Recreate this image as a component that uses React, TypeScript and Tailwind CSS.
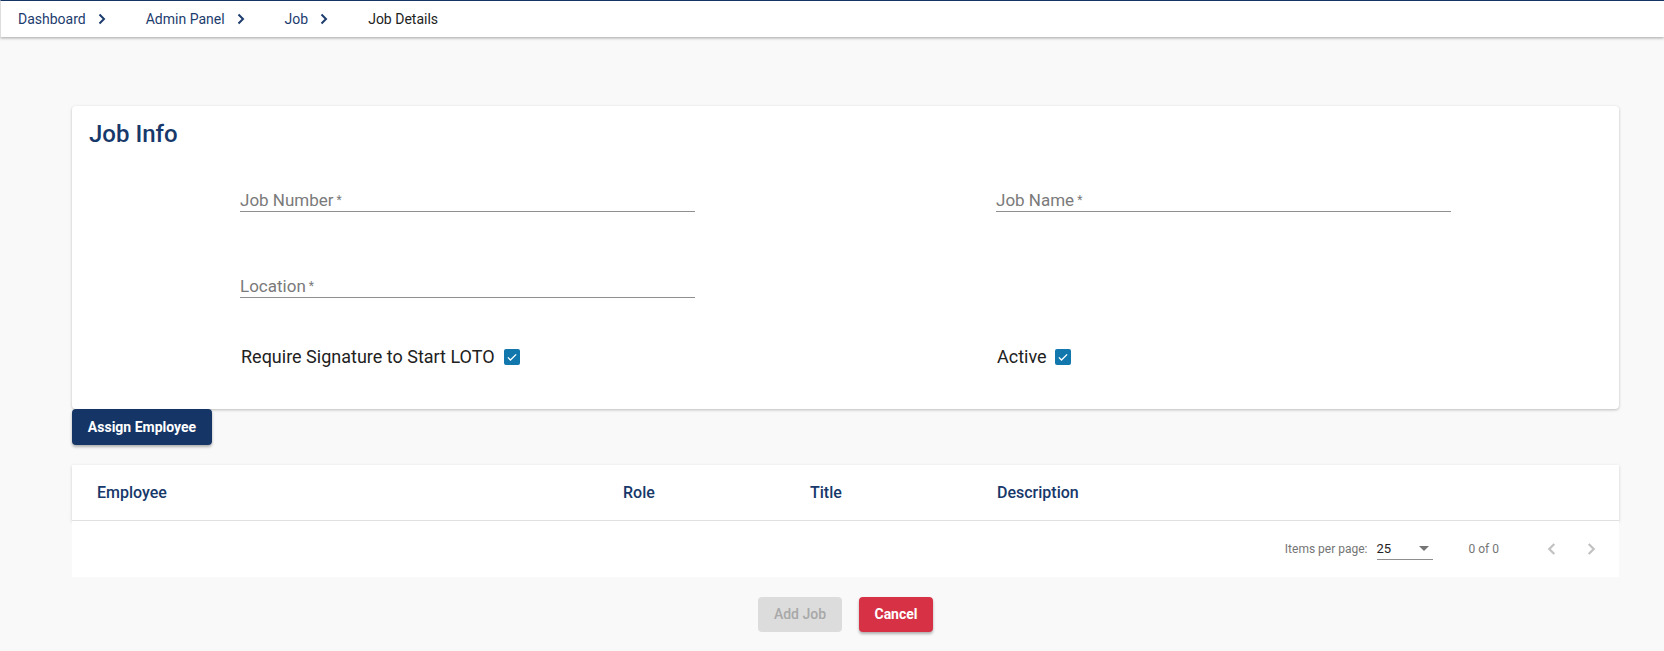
import React from 'react'

const crumbs = ['Dashboard', 'Admin Panel', 'Job']

function Chevron({ className }: { className?: string }) {
  return (
    <svg viewBox="0 0 8 12" className={className} fill="none" stroke="currentColor" strokeWidth={2}>
      <path d="M1.5 1.5 6 6l-4.5 4.5" />
    </svg>
  )
}

function Field({ label }: { label: string }) {
  return (
    <div className="w-[455px] border-b border-[#8f8f8f] pb-[1px]">
      <span className="block text-[17px] leading-[20px] text-[#7a7a7a]">
        {label}
        <span className="ml-[3px] align-top text-[12px] leading-[20px] text-[#7a7a7a]">*</span>
      </span>
    </div>
  )
}

function CheckBox() {
  return (
    <span className="inline-flex h-[16px] w-[16px] items-center justify-center rounded-[2px] bg-[#1177ad]">
      <svg viewBox="0 0 16 16" className="h-[12px] w-[12px]" fill="none" stroke="white" strokeWidth={1.8}>
        <path d="M2.5 8.5 6 12l7.5-7.5" />
      </svg>
    </span>
  )
}

export default function App() {
  const columns = ['Employee', 'Role', 'Title', 'Description']

  return (
    <div className="min-h-screen bg-[#f9f9f9] font-['Roboto',sans-serif]">
      {/* Breadcrumb bar */}
      <header className="flex h-[37px] items-center border-t border-l border-t-[#143566] border-l-[#dddddd] bg-white pl-[17px] shadow-[0_1px_3px_rgba(0,0,0,0.35)]">
        {crumbs.map((c) => (
          <div key={c} className="mr-[40px] flex items-center text-[14px] text-[#1d3c6e]">
            <span>{c}</span>
            <Chevron className="ml-[12px] h-[12px] w-[8px] text-[#1d3c6e]" />
          </div>
        ))}
        <span className="text-[14px] text-[#222222]">Job Details</span>
      </header>

      <main className="pl-[72px] pr-[45px] pt-[69px]">
        {/* Job info card */}
        <section className="h-[303px] rounded-[4px] bg-white pt-[14px] shadow-[0_1px_3px_rgba(0,0,0,0.25)]">
          <h2 className="pl-[17px] text-[24px] font-medium leading-[28px] text-[#17386a]">Job Info</h2>

          <div className="grid grid-cols-[756px_1fr] pl-[168px] pt-[42px]">
            <Field label="Job Number" />
            <Field label="Job Name" />
            <div className="pt-[64px]">
              <Field label="Location" />
            </div>
            <div />
            <div className="flex items-center gap-[9px] pt-[47px] text-[18px] leading-[24px] text-[#212121]">
              <span className="pl-[1px]">Require Signature to Start LOTO</span>
              <CheckBox />
            </div>
            <div className="flex items-center gap-[8px] pt-[47px] text-[18px] leading-[24px] text-[#212121]">
              <span className="pl-[1px]">Active</span>
              <CheckBox />
            </div>
          </div>
        </section>

        <button className="h-[36px] w-[140px] rounded-[4px] bg-[#143566] text-[14px] font-bold text-white shadow-[0_2px_3px_rgba(0,0,0,0.3)]">
          Assign Employee
        </button>

        {/* Employee table */}
        <section className="mt-[20px]">
          <div className="grid h-[56px] grid-cols-[526px_187px_187px_1fr] items-center border-b border-[#e0e0e0] bg-white pl-[25px] shadow-[0_1px_3px_rgba(0,0,0,0.18)]">
            {columns.map((col) => (
              <span key={col} className="text-[16px] font-medium text-[#17386a]">
                {col}
              </span>
            ))}
          </div>
          <div className="flex h-[56px] items-center justify-end bg-white pr-[8px] text-[12px] text-[#757575]">
            <span>Items per page:</span>
            <div className="ml-[9px] flex h-[22px] w-[56px] items-center justify-between border-b border-[#8f8f8f] pr-[4px]">
              <span className="text-[13px] text-[#222222]">25</span>
              <svg viewBox="0 0 10 5" className="h-[5px] w-[10px]">
                <path d="M0 0h10L5 5z" fill="#757575" />
              </svg>
            </div>
            <span className="ml-[36px]">0 of 0</span>
            <div className="ml-[32px] flex">
              <span className="flex h-[40px] w-[40px] items-center justify-center text-[#c2c2c2]">
                <Chevron className="h-[14px] w-[9px] rotate-180" />
              </span>
              <span className="flex h-[40px] w-[40px] items-center justify-center text-[#c2c2c2]">
                <Chevron className="h-[14px] w-[9px]" />
              </span>
            </div>
          </div>
        </section>

        {/* Actions */}
        <div className="mt-[20px] flex justify-center gap-[17px]">
          <button className="h-[35px] w-[84px] rounded-[4px] bg-[#dcdcdc] text-[14px] font-medium text-[#a8a8a8]">
            Add Job
          </button>
          <button className="h-[35px] w-[74px] rounded-[4px] bg-[#d63144] text-[14px] font-bold text-white shadow-[0_2px_3px_rgba(0,0,0,0.3)]">
            Cancel
          </button>
        </div>
      </main>
    </div>
  )
}
